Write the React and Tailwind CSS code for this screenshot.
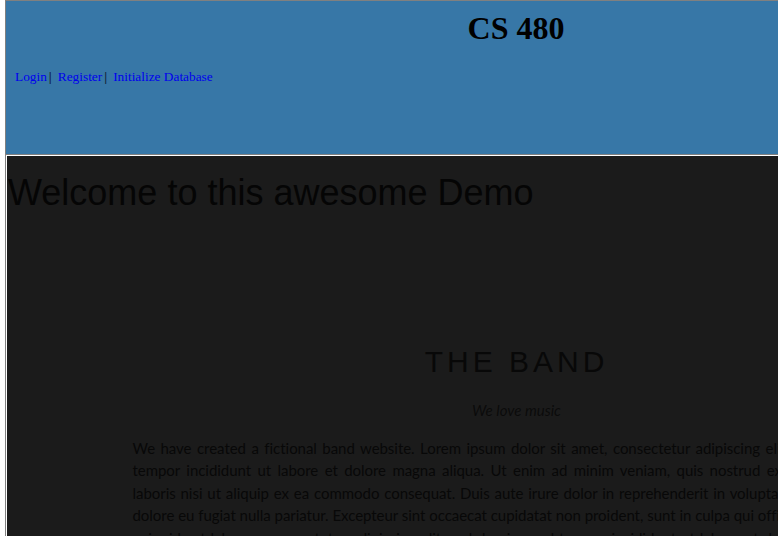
import React from 'react'

const serif = { fontFamily: '"Liberation Serif", "Times New Roman", serif' }

export default function App() {
  return (
    <div className="h-screen w-full overflow-hidden bg-white">
      <div className="ml-[5px] w-[1021px] border-l border-t border-[#808080]">
        {/* Top banner */}
        <header className="h-[153px] bg-[#3777a7] px-[9px] pt-[9px]" style={serif}>
          <h1 className="m-0 text-center text-[32px] font-bold leading-[1.15] text-black">CS 480</h1>
          <nav className="mt-[22px] flex items-center text-[13.33px] leading-[1.15]">
            <a href="#" className="text-[#0000ee]">Login</a>
            <span className="ml-[2px] mr-[6px] font-bold text-[#10243a]">|</span>
            <a href="#" className="text-[#0000ee]">Register</a>
            <span className="ml-[2px] mr-[6px] font-bold text-[#10243a]">|</span>
            <a href="#" className="text-[#0000ee]">Initialize Database</a>
          </nav>
        </header>

        {/* Main area */}
        <main className="border-t border-[#808080]">
          <div className="min-h-[600px] border-l border-t border-white bg-[#1b1b1b]">
            <h1
              className="mt-[16px] pl-[1px] text-[36px] font-normal leading-[1.15] text-[#050505]"
              style={{ fontFamily: '"Liberation Sans", Arial, sans-serif' }}
            >
              Welcome to this awesome Demo
            </h1>

            <section className="mx-auto mt-[52px] w-[800px] px-4 pt-[64px] text-center">
              <h2
                className="mt-[10px] text-[30px] font-normal leading-[1.5] tracking-[4px] text-[#080808]"
                style={{ fontFamily: '"Liberation Sans", Arial, sans-serif' }}
              >
                THE BAND
              </h2>
              <div style={{ fontFamily: 'Lato, sans-serif' }} className="text-[15px] leading-[22.5px] text-[#080808]">
                <p className="mt-[15px] text-black/60"><i>We love music</i></p>
                <p className="mt-[15px] text-justify tracking-[-0.04px]">
                  We have created a fictional band website. Lorem ipsum dolor sit amet, consectetur adipiscing elit, sed do eiusmod tempor incididunt ut labore et dolore magna aliqua. Ut enim ad minim veniam, quis nostrud exercitation ullamco laboris nisi ut aliquip ex ea commodo consequat. Duis aute irure dolor in reprehenderit in voluptate velit esse cillum dolore eu fugiat nulla pariatur. Excepteur sint occaecat cupidatat non proident, sunt in culpa qui officia deserunt mollit anim id est laborum consectetur adipiscing elit, sed do eiusmod tempor incididunt ut labore et dolore magna aliqua. Ut enim ad minim veniam, quis nostrud exercitation ullamco laboris nisi ut aliquip ex ea commodo consequat.
                </p>
              </div>
            </section>
          </div>
        </main>
      </div>
    </div>
  )
}
